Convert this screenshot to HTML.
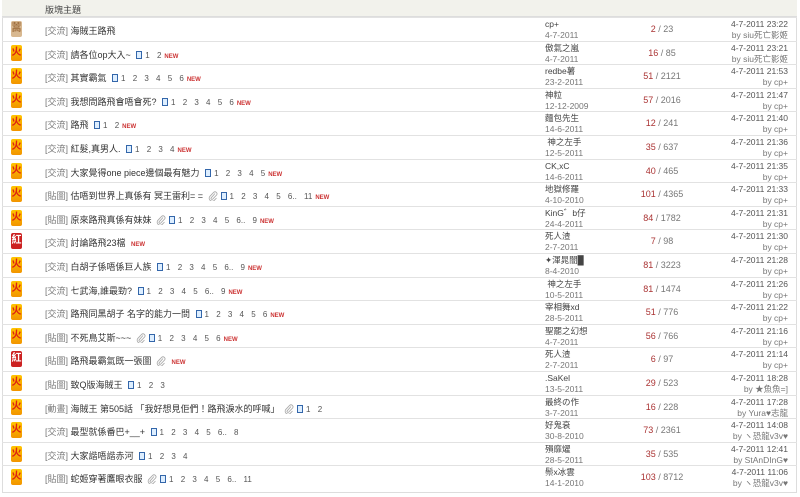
<!DOCTYPE html>
<html><head><meta charset="utf-8"><style>
*{margin:0;padding:0;box-sizing:border-box}
body{width:800px;height:497px;background:#fff;font-family:"Liberation Sans","Noto Sans CJK TC",sans-serif;color:#555;overflow:hidden;position:relative}
.hd{position:absolute;left:2px;top:0;width:795px;height:17px;background:#f2f2ec;border-bottom:1px solid #ddd}
.hd span{position:absolute;left:43px;top:3px;font-size:9px;color:#444}
.box{position:absolute;left:2px;top:17px;width:795px;height:476px;border-left:1px solid #ddd;border-right:1px solid #ddd;border-bottom:1px solid #ddd}
.r{position:absolute;left:2px;width:795px;height:24px;border-top:1px solid #e2e2e2;font-size:8.5px}
.ic{position:absolute;left:9px;top:3px;width:11px;height:16px;background:linear-gradient(#ffc400,#f29400);border-radius:2px;color:#d21;font-size:10px;line-height:16px;text-align:center;font-weight:bold}
.ic.t{background:#d8b890;color:#a07040}
.ic.k{background:#c22;color:#fff}
.ti{position:absolute;left:43px;top:6px;white-space:nowrap;color:#333;font-size:9px}
.ti .p{color:#777}
.pg{color:#555;margin-left:3px;word-spacing:5px;font-size:8px}
.pg i{display:inline-block;width:6px;height:8px;border:1px solid #36a;background:#def;margin-right:3px;vertical-align:-1px}
.new{color:#c33;font-size:6px;font-weight:bold;margin-left:3px}
.cl{display:inline-block;width:10px;height:10px;vertical-align:-2px;margin-left:2px}
.au{position:absolute;left:543px;top:1px;line-height:11px;color:#444}
.au b{font-weight:normal;color:#777;display:block}
.ct{position:absolute;left:610px;width:100px;top:6px;text-align:center;color:#777;font-size:9px}
.ct em{font-style:normal;color:#a33}
.dt{position:absolute;right:9px;top:1px;line-height:11px;text-align:right;color:#555}
.dt b{font-weight:normal;color:#777;display:block}
</style></head><body>
<svg width="0" height="0" style="position:absolute"><symbol id="c" viewBox="0 0 10 10"><path d="M7 2.5 L3.2 6.8 a1 1 0 0 0 1.4 1.4 L8.6 4 a2 2 0 0 0 -2.8 -2.8 L1.8 5.4 a3 3 0 0 0 4.2 4.2 L8.5 7" fill="none" stroke="#aaa" stroke-width="0.9"/></symbol></svg>
<div class="hd"><span>版塊主題</span></div>
<div class="box"></div>
<div class="r" style="top:17px"><div class="ic t">蒿</div><div class="ti"><span class="p">[交流]</span> 海賊王路飛</div><div class="au">cp+<b>4-7-2011</b></div><div class="ct"><em>2</em> / 23</div><div class="dt">4-7-2011 23:22<b>by siu死亡影姬</b></div></div>
<div class="r" style="top:40.6px"><div class="ic">火</div><div class="ti"><span class="p">[交流]</span> 請各位op大入~ <span class="pg"><i></i>1 2</span><span class="new">NEW</span></div><div class="au">傲氣之嵐<b>4-7-2011</b></div><div class="ct"><em>16</em> / 85</div><div class="dt">4-7-2011 23:21<b>by siu死亡影姬</b></div></div>
<div class="r" style="top:64.2px"><div class="ic">火</div><div class="ti"><span class="p">[交流]</span> 其實霸氣 <span class="pg"><i></i>1 2 3 4 5 6</span><span class="new">NEW</span></div><div class="au">redbe薯<b>23-2-2011</b></div><div class="ct"><em>51</em> / 2121</div><div class="dt">4-7-2011 21:53<b>by cp+</b></div></div>
<div class="r" style="top:87.8px"><div class="ic">火</div><div class="ti"><span class="p">[交流]</span> 我想問路飛會唔會死? <span class="pg"><i></i>1 2 3 4 5 6</span><span class="new">NEW</span></div><div class="au">神粒<b>12-12-2009</b></div><div class="ct"><em>57</em> / 2016</div><div class="dt">4-7-2011 21:47<b>by cp+</b></div></div>
<div class="r" style="top:111.4px"><div class="ic">火</div><div class="ti"><span class="p">[交流]</span> 路飛 <span class="pg"><i></i>1 2</span><span class="new">NEW</span></div><div class="au">麵包先生<b>14-6-2011</b></div><div class="ct"><em>12</em> / 241</div><div class="dt">4-7-2011 21:40<b>by cp+</b></div></div>
<div class="r" style="top:135px"><div class="ic">火</div><div class="ti"><span class="p">[交流]</span> 紅髮,真男人. <span class="pg"><i></i>1 2 3 4</span><span class="new">NEW</span></div><div class="au">&nbsp;神之左手<b>12-5-2011</b></div><div class="ct"><em>35</em> / 637</div><div class="dt">4-7-2011 21:36<b>by cp+</b></div></div>
<div class="r" style="top:158.6px"><div class="ic">火</div><div class="ti"><span class="p">[交流]</span> 大家覺得one piece邊個最有魅力 <span class="pg"><i></i>1 2 3 4 5</span><span class="new">NEW</span></div><div class="au">CK,xC<b>14-6-2011</b></div><div class="ct"><em>40</em> / 465</div><div class="dt">4-7-2011 21:35<b>by cp+</b></div></div>
<div class="r" style="top:182.2px"><div class="ic">火</div><div class="ti"><span class="p">[貼圖]</span> 估唔到世界上真係有 冥王雷利= = <svg class="cl"><use href="#c"/></svg><span class="pg"><i></i>1 2 3 4 5 6.. 11</span><span class="new">NEW</span></div><div class="au">地獄修羅<b>4-10-2010</b></div><div class="ct"><em>101</em> / 4365</div><div class="dt">4-7-2011 21:33<b>by cp+</b></div></div>
<div class="r" style="top:205.8px"><div class="ic">火</div><div class="ti"><span class="p">[貼圖]</span> 原來路飛真係有妹妹 <svg class="cl"><use href="#c"/></svg><span class="pg"><i></i>1 2 3 4 5 6.. 9</span><span class="new">NEW</span></div><div class="au">KinG゛b仔<b>24-4-2011</b></div><div class="ct"><em>84</em> / 1782</div><div class="dt">4-7-2011 21:31<b>by cp+</b></div></div>
<div class="r" style="top:229.4px"><div class="ic k">紅</div><div class="ti"><span class="p">[交流]</span> 討論路飛23檔 <span class="new">NEW</span></div><div class="au">死人渣<b>2-7-2011</b></div><div class="ct"><em>7</em> / 98</div><div class="dt">4-7-2011 21:30<b>by cp+</b></div></div>
<div class="r" style="top:253px"><div class="ic">火</div><div class="ti"><span class="p">[交流]</span> 白胡子係唔係巨人族 <span class="pg"><i></i>1 2 3 4 5 6.. 9</span><span class="new">NEW</span></div><div class="au">✦渾晁闇█<b>8-4-2010</b></div><div class="ct"><em>81</em> / 3223</div><div class="dt">4-7-2011 21:28<b>by cp+</b></div></div>
<div class="r" style="top:276.6px"><div class="ic">火</div><div class="ti"><span class="p">[交流]</span> 七武海,誰最勁? <span class="pg"><i></i>1 2 3 4 5 6.. 9</span><span class="new">NEW</span></div><div class="au">&nbsp;神之左手<b>10-5-2011</b></div><div class="ct"><em>81</em> / 1474</div><div class="dt">4-7-2011 21:26<b>by cp+</b></div></div>
<div class="r" style="top:300.2px"><div class="ic">火</div><div class="ti"><span class="p">[交流]</span> 路飛同黑胡子 名字的能力一問 <span class="pg"><i></i>1 2 3 4 5 6</span><span class="new">NEW</span></div><div class="au">宰相舞xd<b>28-5-2011</b></div><div class="ct"><em>51</em> / 776</div><div class="dt">4-7-2011 21:22<b>by cp+</b></div></div>
<div class="r" style="top:323.8px"><div class="ic">火</div><div class="ti"><span class="p">[貼圖]</span> 不死鳥艾斯~~~ <svg class="cl"><use href="#c"/></svg><span class="pg"><i></i>1 2 3 4 5 6</span><span class="new">NEW</span></div><div class="au">聖罷之幻想<b>4-7-2011</b></div><div class="ct"><em>56</em> / 766</div><div class="dt">4-7-2011 21:16<b>by cp+</b></div></div>
<div class="r" style="top:347.4px"><div class="ic k">紅</div><div class="ti"><span class="p">[貼圖]</span> 路飛最霸氣既一張圖 <svg class="cl"><use href="#c"/></svg> <span class="new">NEW</span></div><div class="au">死人渣<b>2-7-2011</b></div><div class="ct"><em>6</em> / 97</div><div class="dt">4-7-2011 21:14<b>by cp+</b></div></div>
<div class="r" style="top:371px"><div class="ic">火</div><div class="ti"><span class="p">[貼圖]</span> 致Q版海賊王 <span class="pg"><i></i>1 2 3</span></div><div class="au">.SaKel<b>13-5-2011</b></div><div class="ct"><em>29</em> / 523</div><div class="dt">4-7-2011 18:28<b>by ★魚魚=]</b></div></div>
<div class="r" style="top:394.6px"><div class="ic">火</div><div class="ti"><span class="p">[動畫]</span> 海賊王 第505話 「我好想見佢們！路飛淚水的呼喊」 <svg class="cl"><use href="#c"/></svg><span class="pg"><i></i>1 2</span></div><div class="au">最終の作<b>3-7-2011</b></div><div class="ct"><em>16</em> / 228</div><div class="dt">4-7-2011 17:28<b>by Yura♥志龍</b></div></div>
<div class="r" style="top:418.2px"><div class="ic">火</div><div class="ti"><span class="p">[交流]</span> 最型就係番巴+__+ <span class="pg"><i></i>1 2 3 4 5 6.. 8</span></div><div class="au">好鬼衰<b>30-8-2010</b></div><div class="ct"><em>73</em> / 2361</div><div class="dt">4-7-2011 14:08<b>by ヽ恐龍v3v♥</b></div></div>
<div class="r" style="top:441.8px"><div class="ic">火</div><div class="ti"><span class="p">[交流]</span> 大家諧唔諧赤河 <span class="pg"><i></i>1 2 3 4</span></div><div class="au">殞靡燿<b>28-5-2011</b></div><div class="ct"><em>35</em> / 535</div><div class="dt">4-7-2011 12:41<b>by StAnDInG♥</b></div></div>
<div class="r" style="top:465.4px;height:27px"><div class="ic">火</div><div class="ti"><span class="p">[貼圖]</span> 蛇姬穿著鷹眼衣服 <svg class="cl"><use href="#c"/></svg><span class="pg"><i></i>1 2 3 4 5 6.. 11</span></div><div class="au">鬃x冰雲<b>14-1-2010</b></div><div class="ct"><em>103</em> / 8712</div><div class="dt">4-7-2011 11:06<b>by ヽ恐龍v3v♥</b></div></div>
</body></html>
